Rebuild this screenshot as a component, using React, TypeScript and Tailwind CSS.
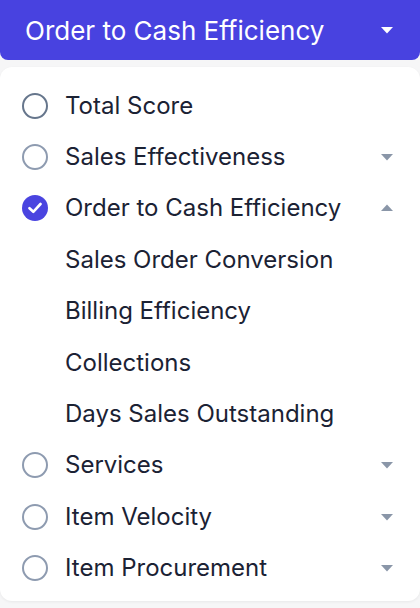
const items: { label: string; state: "idle" | "hover" | "checked"; caret?: "down" | "up"; children?: string[] }[] = [
  { label: "Total Score", state: "hover" },
  { label: "Sales Effectiveness", state: "idle", caret: "down" },
  {
    label: "Order to Cash Efficiency",
    state: "checked",
    caret: "up",
    children: ["Sales Order Conversion", "Billing Efficiency", "Collections", "Days Sales Outstanding"],
  },
  { label: "Services", state: "idle", caret: "down" },
  { label: "Item Velocity", state: "idle", caret: "down" },
  { label: "Item Procurement", state: "idle", caret: "down" },
];

const Caret = ({ up, white }: { up?: boolean; white?: boolean }) => (
  <svg width="14" height="8" viewBox="0 0 14 8" className={up ? "rotate-180" : ""}>
    <path d="M1 1h12L7 7.5z" className={white ? "fill-white" : "fill-[#8a96a8]"} />
  </svg>
);

const Radio = ({ state }: { state: "idle" | "hover" | "checked" }) => {
  if (state === "checked") {
    return (
      <span className="flex h-[26px] w-[26px] shrink-0 items-center justify-center rounded-full bg-[#4a44e0]">
        <svg width="14" height="12" viewBox="0 0 14 12">
          <path d="M1.5 6.2l3.8 3.6L12.5 2" stroke="white" strokeWidth="2.6" fill="none" strokeLinecap="round" strokeLinejoin="round" />
        </svg>
      </span>
    );
  }
  return (
    <span
      className={`h-[26px] w-[26px] shrink-0 rounded-full border-[2.5px] ${state === "hover" ? "border-[#66768c]" : "border-[#8e9bb0]"}`}
    />
  );
};

export default function App() {
  return (
    <div className="min-h-[608px] bg-[#f6f6f7] font-['Inter',sans-serif]">
      <button className="flex h-[60px] w-full items-center justify-between rounded-b-[8px] bg-[#4842e0] pl-[25px] pr-[26px] text-[26px] text-white">
        <span>Order to Cash Efficiency</span>
        <Caret white />
      </button>
      <div className="mt-[7px] flex flex-col rounded-[12px] bg-white pt-[13px] pb-[7px] shadow-[0_1px_3px_rgba(0,0,0,0.06)]">
        {items.map((item) => (
          <div key={item.label}>
            <div className="flex h-[51.4px] items-center pl-[22px] pr-[26px]">
              <Radio state={item.state} />
              <span className="ml-[17px] flex-1 text-[24px] text-[#1b2234]">{item.label}</span>
              {item.caret && <Caret up={item.caret === "up"} />}
            </div>
            {item.children?.map((c) => (
              <div key={c} className="flex h-[51.4px] items-center pl-[65px] text-[24px] text-[#1b2234]">
                {c}
              </div>
            ))}
          </div>
        ))}
      </div>
    </div>
  );
}
